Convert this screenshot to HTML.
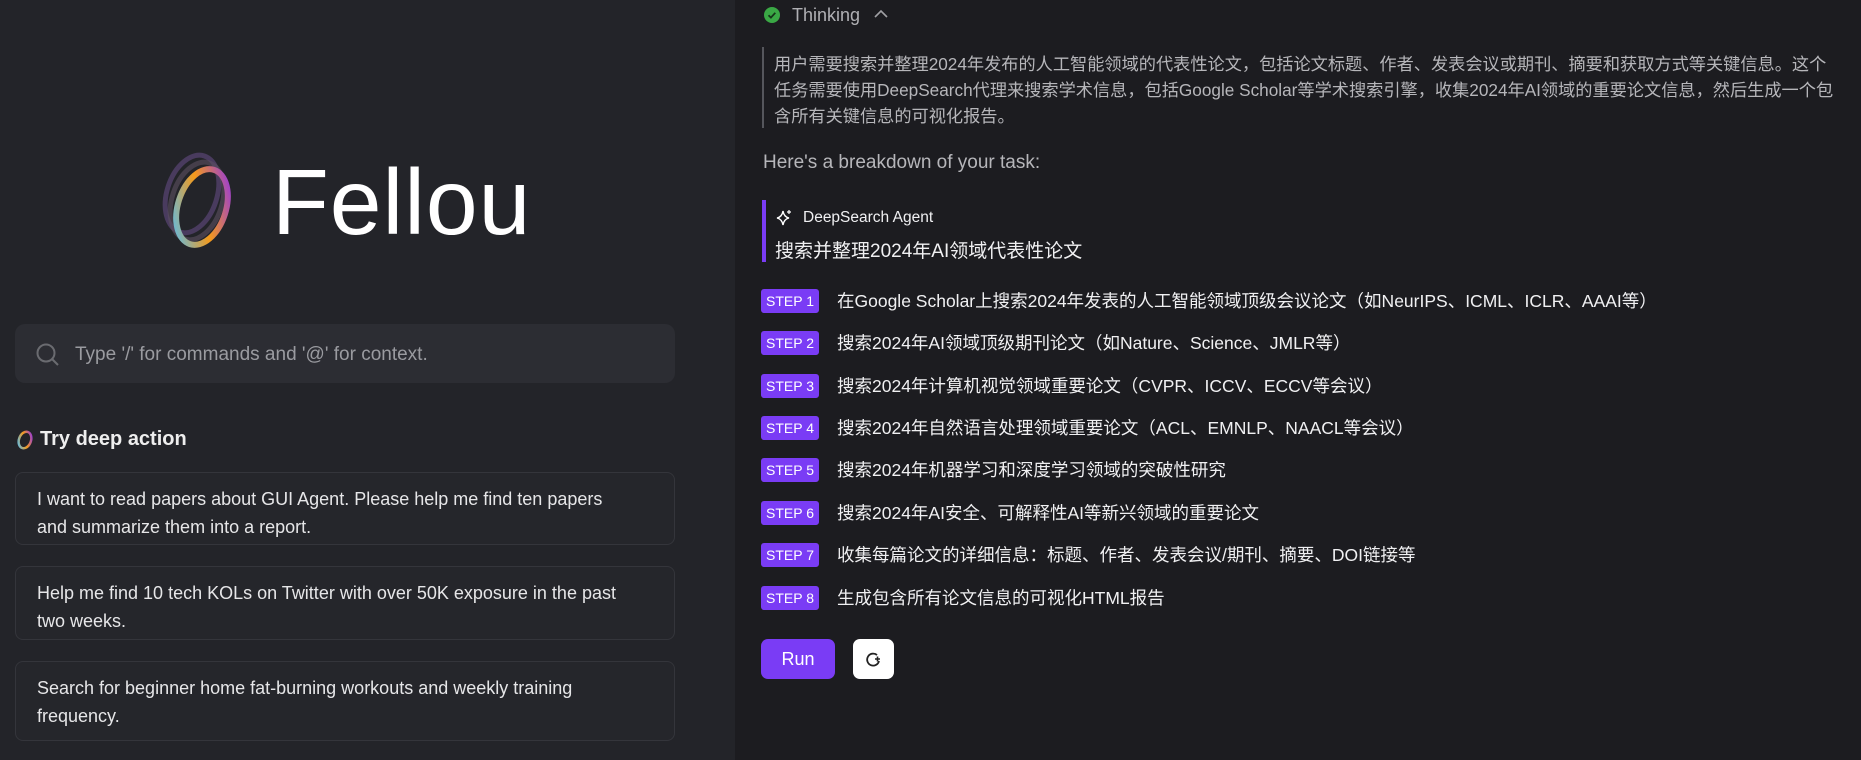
<!DOCTYPE html>
<html><head><meta charset="utf-8"><style>
*{margin:0;padding:0;box-sizing:border-box}
body{width:1861px;height:732px;overflow:hidden;background:#1c1c20;font-family:"Liberation Sans","Noto Sans CJK SC",sans-serif;position:relative;color:#e8e8ea}
.left{position:absolute;left:0;top:0;width:735px;height:760px;background:#232429}
.abs{position:absolute}
.search{left:15px;top:324px;width:660px;height:59px;background:#2c2d33;border-radius:10px}
.card{left:15px;width:660px;border:1px solid #34353b;border-radius:8px;background:#25262b;padding:12px 48px 12px 21px;font-size:18px;line-height:28px;color:#e6e6e8}
.step{position:absolute;left:761px;height:24px;width:58px;background:#7a3cf5;border-radius:3px;color:#fff;font-size:14px;line-height:24px;text-align:center}
.st{position:absolute;left:837px;font-size:17.5px;color:#f0f0f2;line-height:24px;white-space:nowrap}
</style></head><body>
<div class="left">
<svg class="abs" style="left:160px;top:150px" width="76" height="102" viewBox="0 0 76 102">
<defs><linearGradient id="g" x1="0" y1="1" x2="1" y2="0"><stop offset="0" stop-color="#4cc0ff"/><stop offset=".5" stop-color="#f59a1a"/><stop offset="1" stop-color="#8b2cf5"/></linearGradient></defs>
<ellipse cx="32" cy="44" rx="25" ry="40" transform="rotate(18 32 44)" fill="none" stroke="#6a4e8a" stroke-width="5" opacity=".55"/>
<ellipse cx="37" cy="51" rx="25" ry="40" transform="rotate(18 37 51)" fill="none" stroke="#5c5060" stroke-width="5" opacity=".6"/>
<ellipse cx="42" cy="57" rx="24" ry="39" transform="rotate(18 42 57)" fill="none" stroke="url(#g)" stroke-width="6"/>
</svg>
<div class="abs" style="left:272px;top:152px;font-size:93px;font-weight:300;color:#fff;letter-spacing:1px;line-height:100px">Fellou</div>
<div class="abs search">
<svg class="abs" style="left:20px;top:18px" width="26" height="26" viewBox="0 0 26 26"><circle cx="11" cy="11" r="8.5" fill="none" stroke="#6a6b70" stroke-width="2"/><path d="M17 17l6 6" stroke="#6a6b70" stroke-width="2"/></svg>
<div class="abs" style="left:60px;top:20px;font-size:19px;color:#9a9ba0">Type '/' for commands and '@' for context.</div>
</div>
<svg class="abs" style="left:15px;top:429px" width="20" height="22" viewBox="0 0 20 22"><ellipse cx="10" cy="11" rx="6" ry="8.5" transform="rotate(20 10 11)" fill="none" stroke="url(#g)" stroke-width="2.5"/></svg>
<div class="abs" style="left:40px;top:428px;font-size:20px;font-weight:bold;color:#eee">Try deep action</div>
<div class="abs card" style="top:472px;height:73px">I want to read papers about GUI Agent. Please help me find ten papers and summarize them into a report.</div>
<div class="abs card" style="top:566px;height:74px">Help me find 10 tech KOLs on Twitter with over 50K exposure in the past two weeks.</div>
<div class="abs card" style="top:661px;height:80px">Search for beginner home fat-burning workouts and weekly training frequency.</div>
</div>
<svg class="abs" style="left:763px;top:6px" width="18" height="18" viewBox="0 0 18 18"><circle cx="9" cy="9" r="8" fill="#3aa845"/><path d="M5.5 9.2l2.4 2.4 4.4-4.8" fill="none" stroke="#16341a" stroke-width="1.8"/></svg>
<div class="abs" style="left:792px;top:5px;font-size:18px;color:#b0b0b4">Thinking</div>
<svg class="abs" style="left:873px;top:8px" width="16" height="12" viewBox="0 0 16 12"><path d="M2 9l6-6 6 6" fill="none" stroke="#a0a0a4" stroke-width="1.6"/></svg>
<div class="abs" style="left:762px;top:47px;width:2px;height:81px;background:#55565c"></div>
<div class="abs" style="left:774px;top:51px;font-size:17.2px;line-height:26px;color:#b6b6ba;white-space:nowrap">用户需要搜索并整理2024年发布的人工智能领域的代表性论文，包括论文标题、作者、发表会议或期刊、摘要和获取方式等关键信息。这个<br>任务需要使用DeepSearch代理来搜索学术信息，包括Google Scholar等学术搜索引擎，收集2024年AI领域的重要论文信息，然后生成一个包<br>含所有关键信息的可视化报告。</div>
<div class="abs" style="left:763px;top:152px;font-size:19px;color:#b6b6ba">Here's a breakdown of your task:</div>
<div class="abs" style="left:762px;top:200px;width:4px;height:62px;background:#7a3cf5"></div>
<svg class="abs" style="left:776px;top:209px" width="17" height="17" viewBox="0 0 17 17"><path d="M7 2 Q8 8 13 9 Q8 10 7 16 Q6 10 1 9 Q6 8 7 2Z" fill="none" stroke="#fff" stroke-width="1.4"/><path d="M13 1v4M11 3h4" stroke="#fff" stroke-width="1.2"/></svg>
<div class="abs" style="left:803px;top:209px;font-size:15.5px;color:#f0f0f2">DeepSearch Agent</div>
<div class="abs" style="left:775px;top:236px;font-size:19px;color:#f0f0f2">搜索并整理2024年AI领域代表性论文</div>
<div class="step" style="top:289px">STEP 1</div><div class="st" style="top:289px">在Google Scholar上搜索2024年发表的人工智能领域顶级会议论文（如NeurIPS、ICML、ICLR、AAAI等）</div>
<div class="step" style="top:331px">STEP 2</div><div class="st" style="top:331px">搜索2024年AI领域顶级期刊论文（如Nature、Science、JMLR等）</div>
<div class="step" style="top:374px">STEP 3</div><div class="st" style="top:374px">搜索2024年计算机视觉领域重要论文（CVPR、ICCV、ECCV等会议）</div>
<div class="step" style="top:416px">STEP 4</div><div class="st" style="top:416px">搜索2024年自然语言处理领域重要论文（ACL、EMNLP、NAACL等会议）</div>
<div class="step" style="top:458px">STEP 5</div><div class="st" style="top:458px">搜索2024年机器学习和深度学习领域的突破性研究</div>
<div class="step" style="top:501px">STEP 6</div><div class="st" style="top:501px">搜索2024年AI安全、可解释性AI等新兴领域的重要论文</div>
<div class="step" style="top:543px">STEP 7</div><div class="st" style="top:543px">收集每篇论文的详细信息：标题、作者、发表会议/期刊、摘要、DOI链接等</div>
<div class="step" style="top:586px">STEP 8</div><div class="st" style="top:586px">生成包含所有论文信息的可视化HTML报告</div>
<div class="abs" style="left:761px;top:639px;width:74px;height:40px;background:#7a3cf5;border-radius:7px;color:#fff;font-size:18px;line-height:40px;text-align:center">Run</div>
<div class="abs" style="left:853px;top:639px;width:41px;height:40px;background:#fff;border-radius:7px"><svg style="position:absolute;left:12px;top:12px" width="17" height="17" viewBox="0 0 17 17"><path d="M12 4A6 6 0 1 0 14 10" fill="none" stroke="#222" stroke-width="1.8"/><path d="M10 8h5M12.5 5.5v5" stroke="#222" stroke-width="1.6"/></svg></div>
</body></html>
